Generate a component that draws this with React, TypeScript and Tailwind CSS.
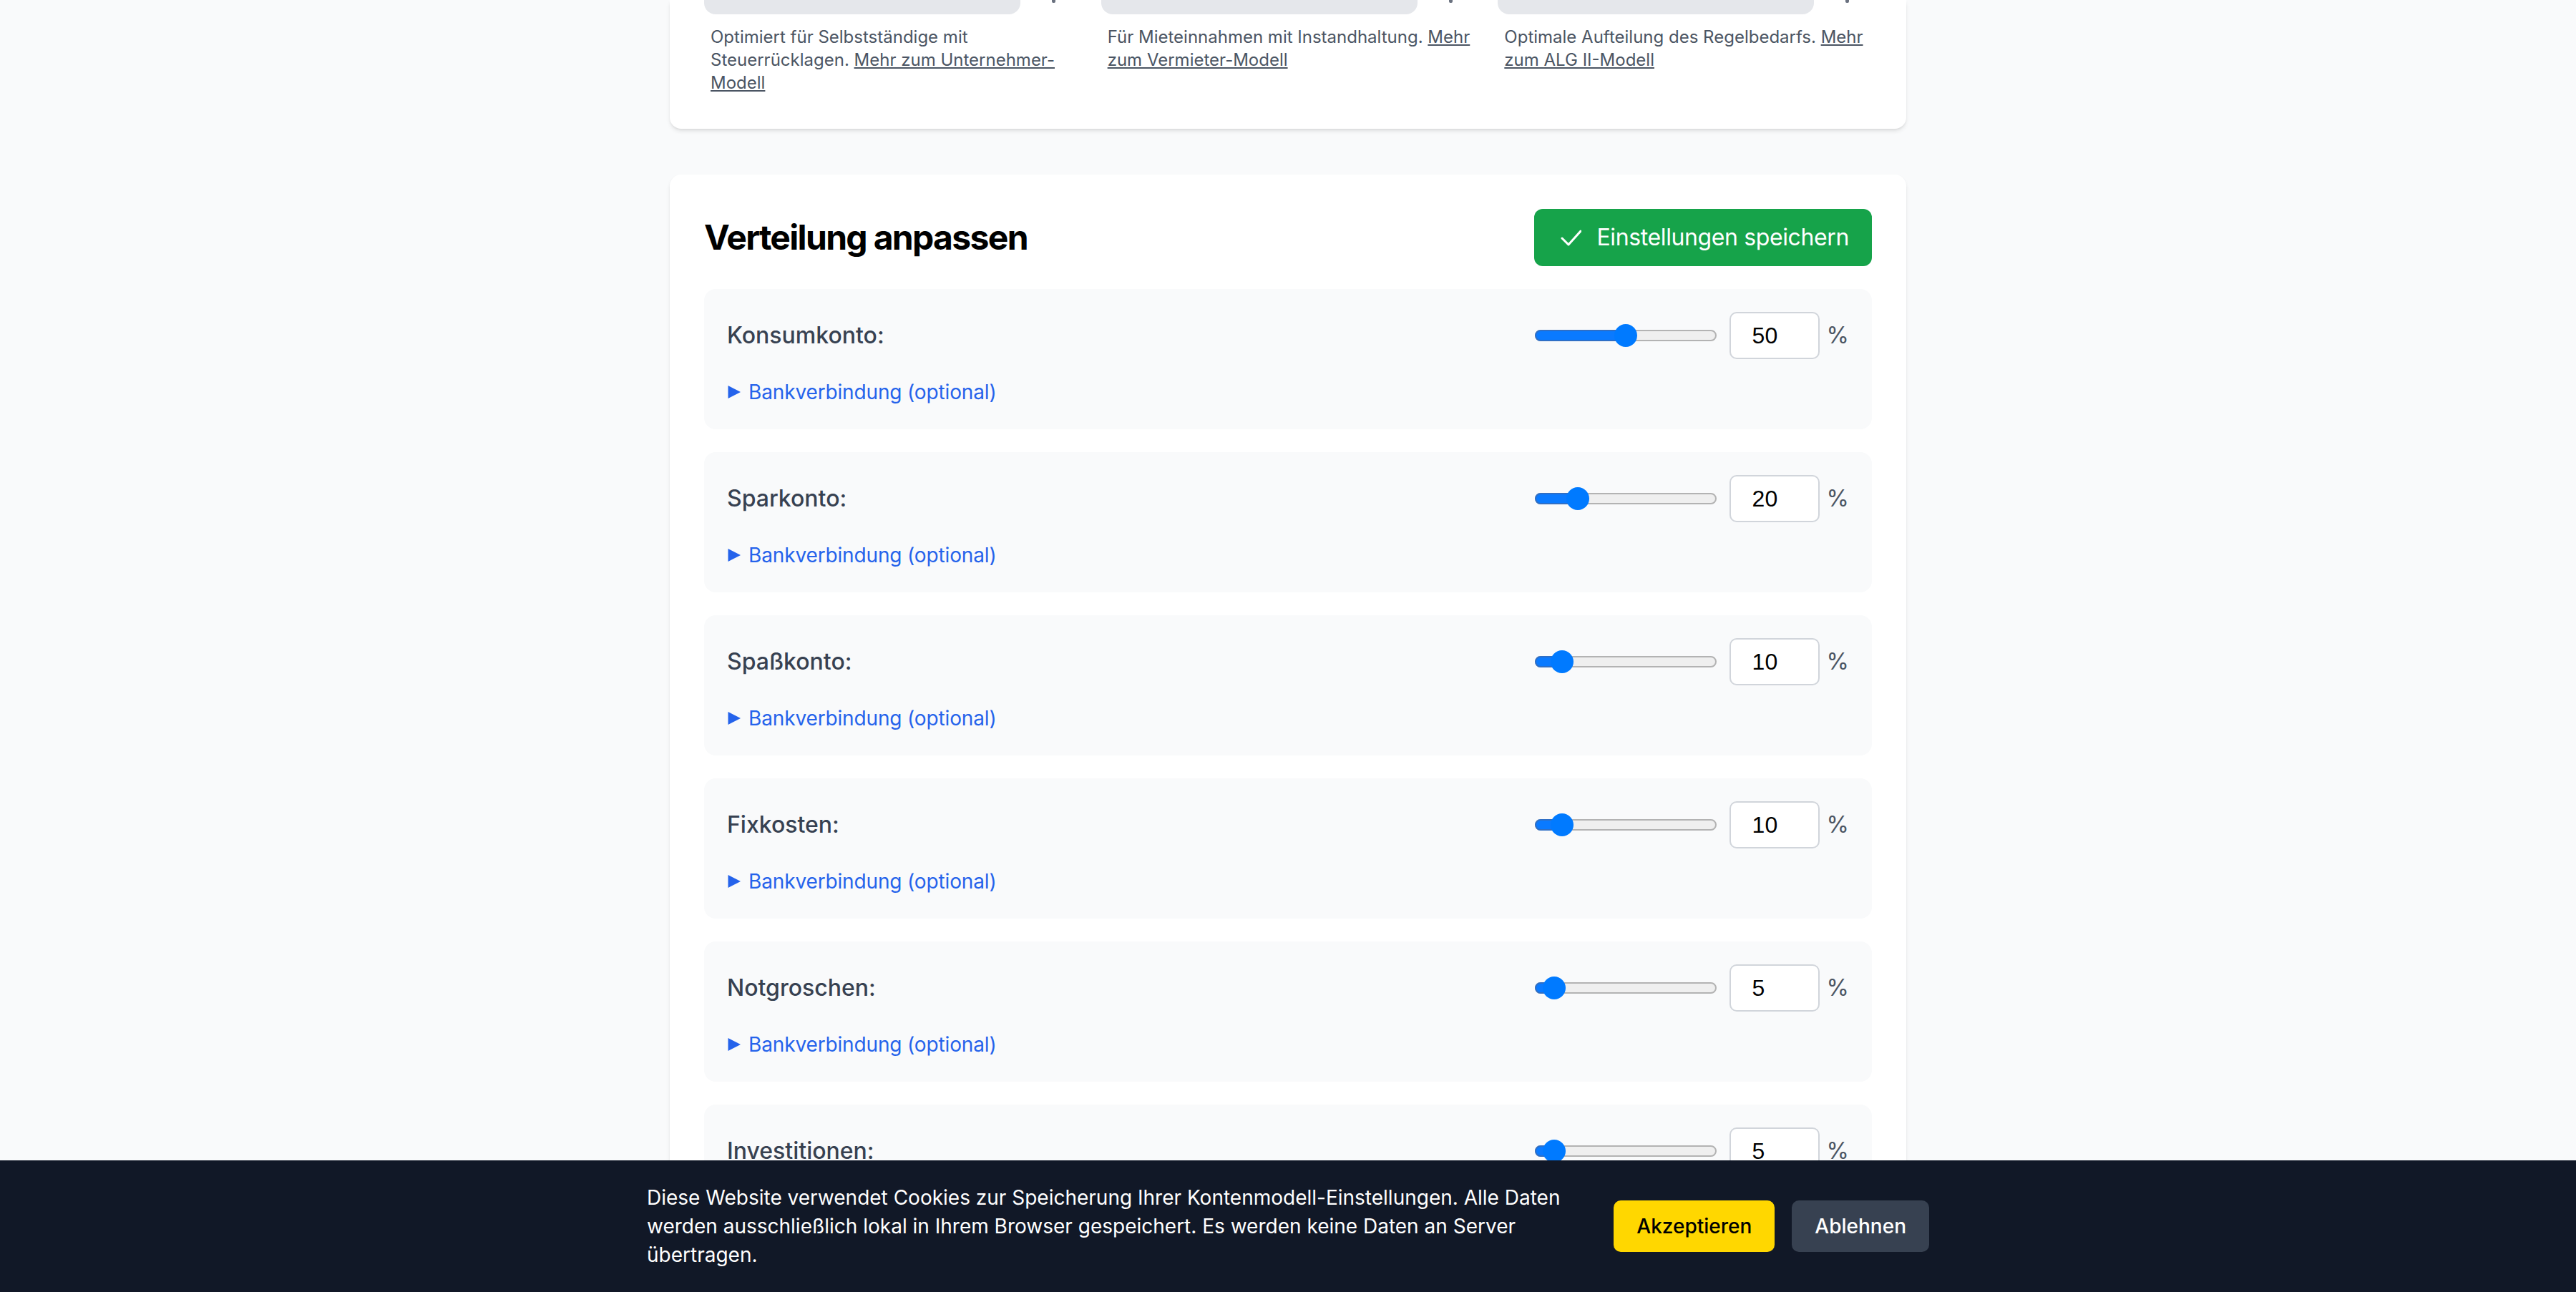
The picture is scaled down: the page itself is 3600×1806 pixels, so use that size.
import React from "react";

type Row = { label: string; value: number };

const rows: Row[] = [
  { label: "Konsumkonto:", value: 50 },
  { label: "Sparkonto:", value: 20 },
  { label: "Spaßkonto:", value: 10 },
  { label: "Fixkosten:", value: 10 },
  { label: "Notgroschen:", value: 5 },
  { label: "Investitionen:", value: 5 },
  { label: "Steuern:", value: 0 },
];

function Slider({ value }: { value: number }) {
  const center = 16 + (value / 100) * 222;
  return (
    <div className="relative w-[254px] h-[16px] rounded-full border-[2px] border-[#b3b3b3] bg-[#efefef]">
      <div
        className="absolute left-[-2px] top-[-2px] h-[16px] rounded-full bg-[#0a7aff] border-[2px] border-[#2f6fc6]"
        style={{ width: center + 2 }}
      />
      <div
        className="absolute top-1/2 -translate-y-1/2 -translate-x-1/2 w-[32px] h-[32px] rounded-full bg-[#007aff]"
        style={{ left: center - 2 }}
      />
    </div>
  );
}

function AccountRow({ row }: { row: Row }) {
  return (
    <div className="bg-[#f9fafb] rounded-[16px] p-[32px]">
      <div className="flex items-center justify-between h-[66px]">
        <span className="text-[32px] leading-[48px] font-medium text-[#374151]">{row.label}</span>
        <div className="flex items-center">
          <Slider value={row.value} />
          <div className="ml-[18px] w-[126px] h-[66px] border-[2px] border-[#d1d5db] rounded-[10px] bg-white flex items-center pl-[30px] text-[32px] text-black font-['Liberation_Sans',Arial,sans-serif]">
            {row.value}
          </div>
          <span className="ml-[10px] text-[32px] leading-[48px] text-[#4b5563]">%</span>
        </div>
      </div>
      <div className="mt-[26px] flex items-center gap-[10px] text-[28px] leading-[40px] text-[#2563eb]">
        <svg width="20" height="20" viewBox="0 0 20 20" className="shrink-0">
          <path d="M1.5 1 L19 10 L1.5 19 Z" fill="#2563eb" />
        </svg>
        <span className="tracking-[-0.005em]">Bankverbindung (optional)</span>
      </div>
    </div>
  );
}

function ModelColumn({ children }: { children: React.ReactNode }) {
  return (
    <div>
      <div className="flex items-start">
        <div className="w-[442px] h-[20px] bg-[#e5e7eb] rounded-b-[16px]" />
        <div className="ml-[44px] w-[5px] h-[4px] bg-[#6b7280] rounded-b-[2px]" />
      </div>
      <p className="mt-[16px] px-[9px] text-[24px] leading-[32px] text-[#4b5563] whitespace-nowrap">
        {children}
      </p>
    </div>
  );
}

export default function App() {
  return (
    <div className="min-h-screen bg-[#f9fafb] font-['Inter','Noto_Sans',sans-serif] pb-[260px]">
      <div className="max-w-[1792px] mx-auto px-[32px]">
        <div className="bg-white rounded-b-[16px] shadow-md px-[48px] pb-[48px]">
          <div className="grid grid-cols-3 gap-x-[32px]">
            <ModelColumn>
              Optimiert für Selbstständige mit
              <br />
              Steuerrücklagen. <span className="underline">Mehr zum Unternehmer-</span>
              <br />
              <span className="underline">Modell</span>
            </ModelColumn>
            <ModelColumn>
              Für Mieteinnahmen mit Instandhaltung. <span className="underline">Mehr</span>
              <br />
              <span className="underline">zum Vermieter-Modell</span>
            </ModelColumn>
            <ModelColumn>
              Optimale Aufteilung des Regelbedarfs. <span className="underline">Mehr</span>
              <br />
              <span className="underline">zum ALG II-Modell</span>
            </ModelColumn>
          </div>
        </div>

        <div className="mt-[64px] bg-white rounded-[16px] shadow-md p-[48px]">
          <div className="flex items-center justify-between h-[80px] mb-[32px]">
            <h2 className="text-[48px] leading-[64px] font-bold text-black tracking-[-0.035em]">Verteilung anpassen</h2>
            <button className="h-[80px] px-[32px] rounded-[12px] bg-[#16a34a] text-white text-[32px] leading-[48px] flex items-center gap-[22px]">
              <svg width="34" height="34" viewBox="0 0 34 34" fill="none">
                <path d="M7 18 L16 27 L33 8" stroke="white" strokeWidth="3" strokeLinecap="round" strokeLinejoin="round" />
              </svg>
              <span className="tracking-[-0.012em]">Einstellungen speichern</span>
            </button>
          </div>
          <div className="flex flex-col gap-[32px]">
            {rows.map((r) => (
              <AccountRow key={r.label} row={r} />
            ))}
          </div>
        </div>
      </div>

      <div className="fixed bottom-0 left-0 right-0 bg-[#111827] py-[32px]">
        <div className="max-w-[1792px] mx-auto flex items-center justify-between">
          <div className="text-[28px] leading-[40px] text-white whitespace-nowrap">
            <div>Diese Website verwendet Cookies zur Speicherung Ihrer Kontenmodell-Einstellungen. Alle Daten</div>
            <div>werden ausschließlich lokal in Ihrem Browser gespeichert. Es werden keine Daten an Server</div>
            <div>übertragen.</div>
          </div>
          <div className="flex items-center gap-[24px]">
            <button className="px-[32px] py-[16px] text-[28px] leading-[40px] font-medium bg-[#ffd700] text-black rounded-[10px]">
              Akzeptieren
            </button>
            <button className="px-[32px] py-[16px] text-[28px] leading-[40px] font-medium bg-[#374151] text-white rounded-[10px]">
              Ablehnen
            </button>
          </div>
        </div>
      </div>
    </div>
  );
}
